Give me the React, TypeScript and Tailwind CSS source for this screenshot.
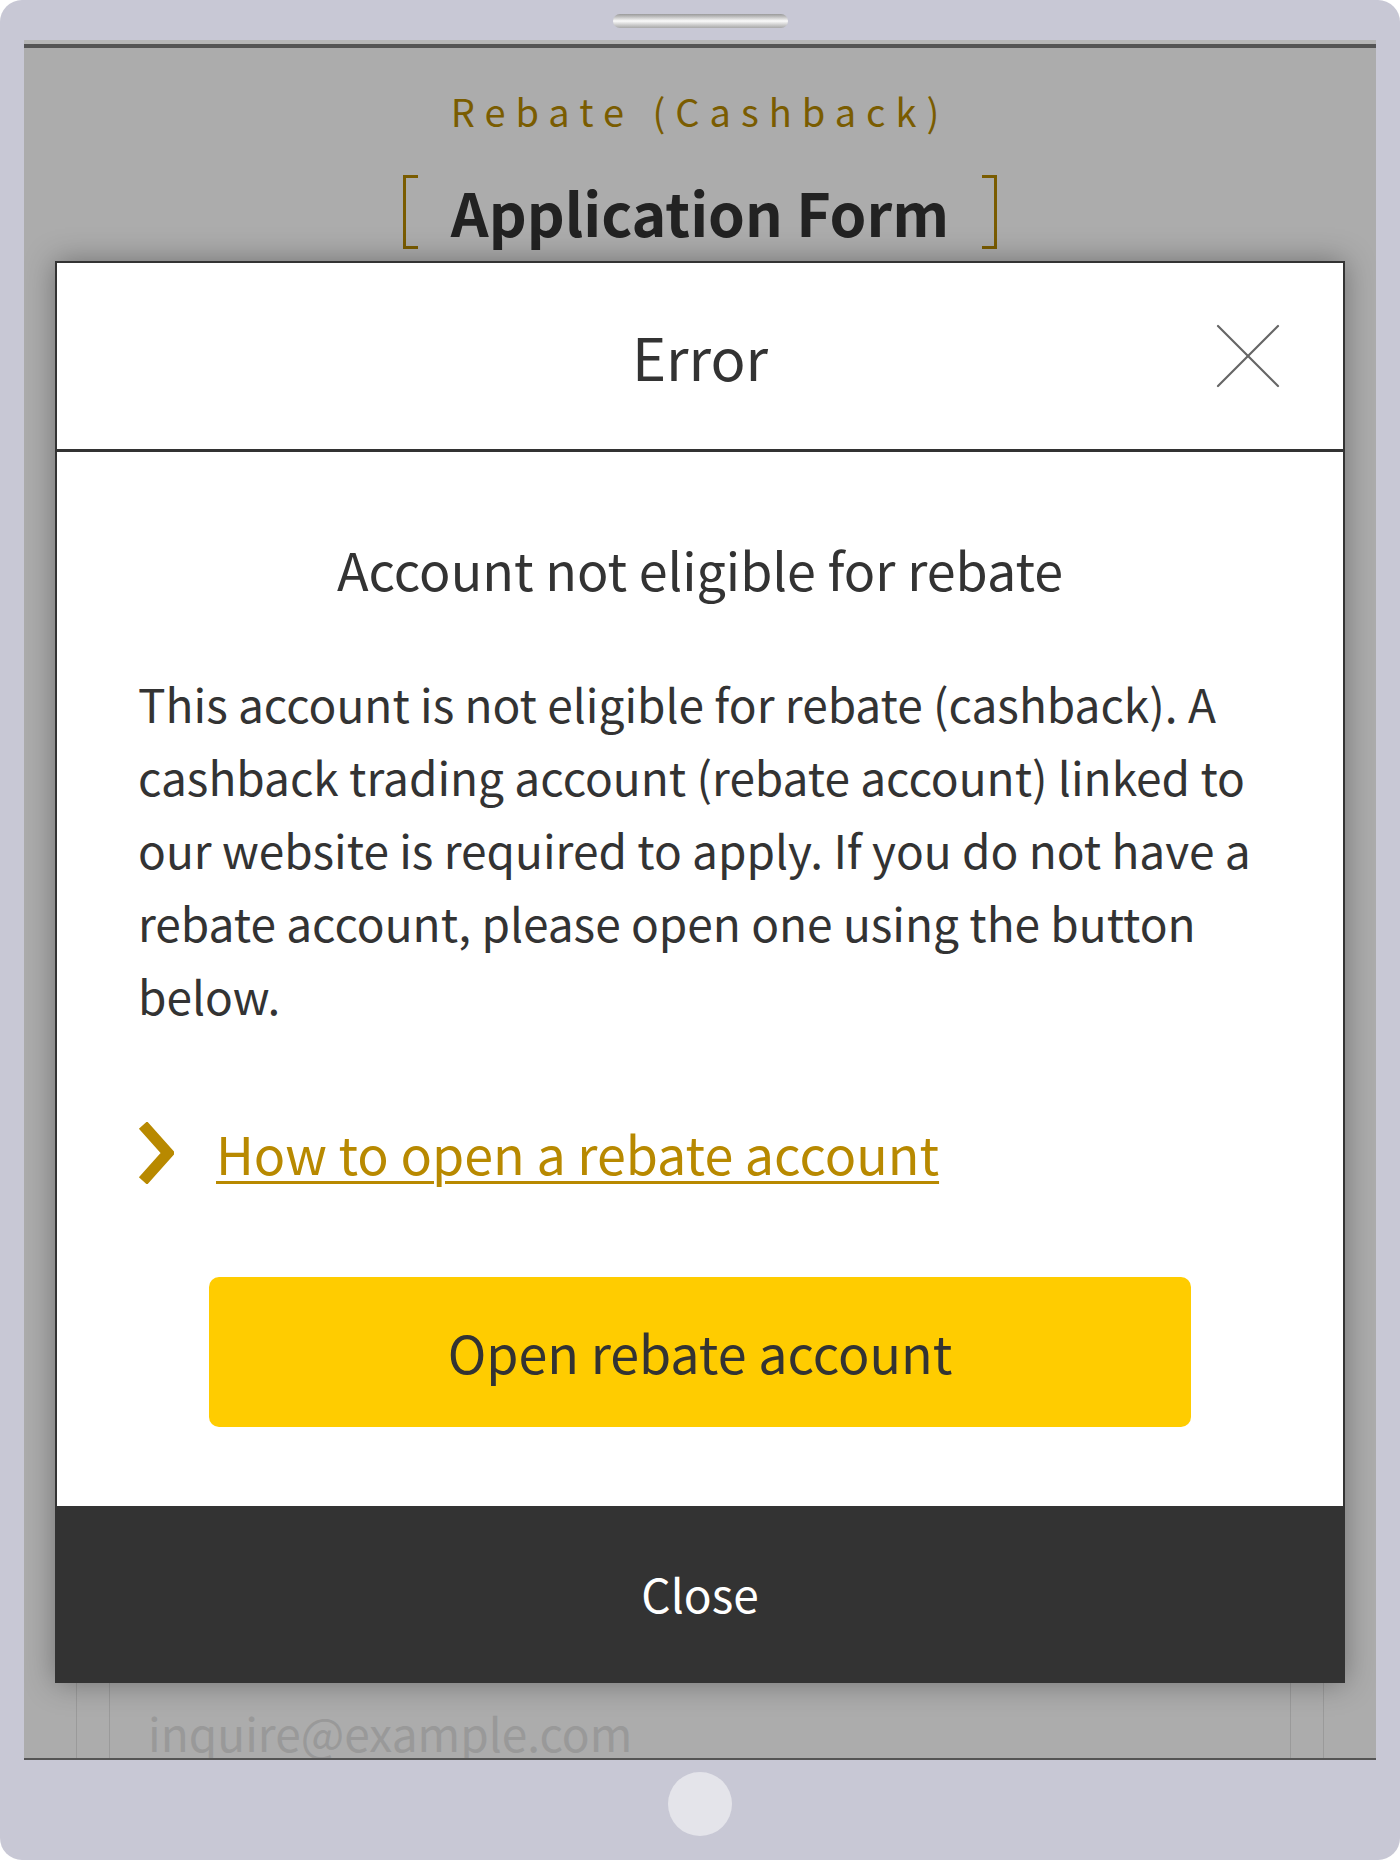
import { X } from "lucide-react";

const font = { fontFamily: '"Noto Sans CJK JP", "Noto Sans", sans-serif' };

function Chevron() {
  return (
    <svg width="36" height="62" viewBox="0 0 36 62" className="shrink-0">
      <polyline points="5,3 30,31 5,59" fill="none" stroke="#b88900" strokeWidth="11" strokeLinejoin="miter" />
    </svg>
  );
}

function ErrorModal() {
  return (
    <div className="absolute left-[31px] top-[221px] w-[1290px] border-2 border-[#333] bg-white shadow-[0_0_28px_rgba(0,0,0,0.35)]">
      {/* header */}
      <div className="relative flex h-[189px] items-center justify-center border-b-[3px] border-[#333]">
        <h2 className="text-[58px] leading-none text-[#333]">Error</h2>
        <button className="absolute right-[35px] top-[33px] text-[#666]">
          <X size={120} strokeWidth={2.2} absoluteStrokeWidth />
        </button>
      </div>

      {/* body */}
      <div className="px-[81px] pt-[76px] pb-[79px]">
        <h3 className="text-center text-[52px] leading-[81px] text-[#333]">Account not eligible for rebate</h3>
        <p className="mt-[58px] text-[46px] leading-[73px] text-[#333]">
          This account is not eligible for rebate (cashback). A cashback trading account (rebate account) linked to our website is required to apply. If you do not have a rebate account, please open one using the button below.
        </p>
        <a href="#" className="mt-[80px] flex items-center gap-[42px] text-[52px] leading-[81px] text-[#b88900]">
          <Chevron />
          <span className="underline decoration-[3px] underline-offset-[6px]">How to open a rebate account</span>
        </a>
        <div className="mt-[84px] flex justify-center">
          <button className="flex h-[150px] w-[982px] items-center justify-center rounded-[10px] bg-[#ffcc00] text-[52px] text-[#333]">
            Open rebate account
          </button>
        </div>
      </div>

      {/* footer */}
      <button className="flex h-[175px] w-full items-center justify-center bg-[#333] text-[46px] text-white">
        Close
      </button>
    </div>
  );
}

export default function App() {
  return (
    <div className="flex h-[1860px] w-[1400px] flex-col rounded-[22px] bg-[#c8c8d5]" style={font}>
      <div className="flex h-[40px] justify-center pt-[14px]">
        <div className="h-[14px] w-[175px] rounded-full bg-linear-to-b from-[#9a9a9a] via-[#fbfbfb] to-[#a8a8a8]" />
      </div>

      <div className="relative mx-[24px] flex h-[1718px] flex-col overflow-hidden bg-[#acacac]">
        <div className="h-[4px] bg-[#b6b6b6]" />
        <div className="h-[4px] bg-[#555]" />

        {/* page under overlay */}
        <div className="flex flex-col items-center pt-[33px]">
          <p className="text-[38px] leading-[60px] tracking-[10px] text-[#7a5c00]">Rebate (Cashback)</p>
          <div className="mt-[34px] flex items-center gap-[33px]">
            <span className="h-[74px] w-[15px] border-y-[3px] border-l-[3px] border-[#7a5c00]" />
            <h1 className="text-[59px] font-bold leading-[74px] text-[#222]">Application Form</h1>
            <span className="h-[74px] w-[15px] border-y-[3px] border-r-[3px] border-[#7a5c00]" />
          </div>
        </div>

        <div className="mt-auto mx-[52px] -mb-[60px] h-[150px] border-x border-[#9a9a9a] px-[32px]">
          <div className="h-full border-x border-[#9a9a9a] pl-[38px] pt-[34px]">
            <span className="text-[46px] leading-[60px] text-[#999]">inquire@example.com</span>
          </div>
        </div>

        <ErrorModal />
      </div>
      <div className="h-[2px] mx-[24px] bg-[#555]" />

      <div className="flex flex-1 justify-center pt-[12px]">
        <div className="h-[64px] w-[64px] rounded-full bg-[#e4e4ea]" />
      </div>
    </div>
  );
}
